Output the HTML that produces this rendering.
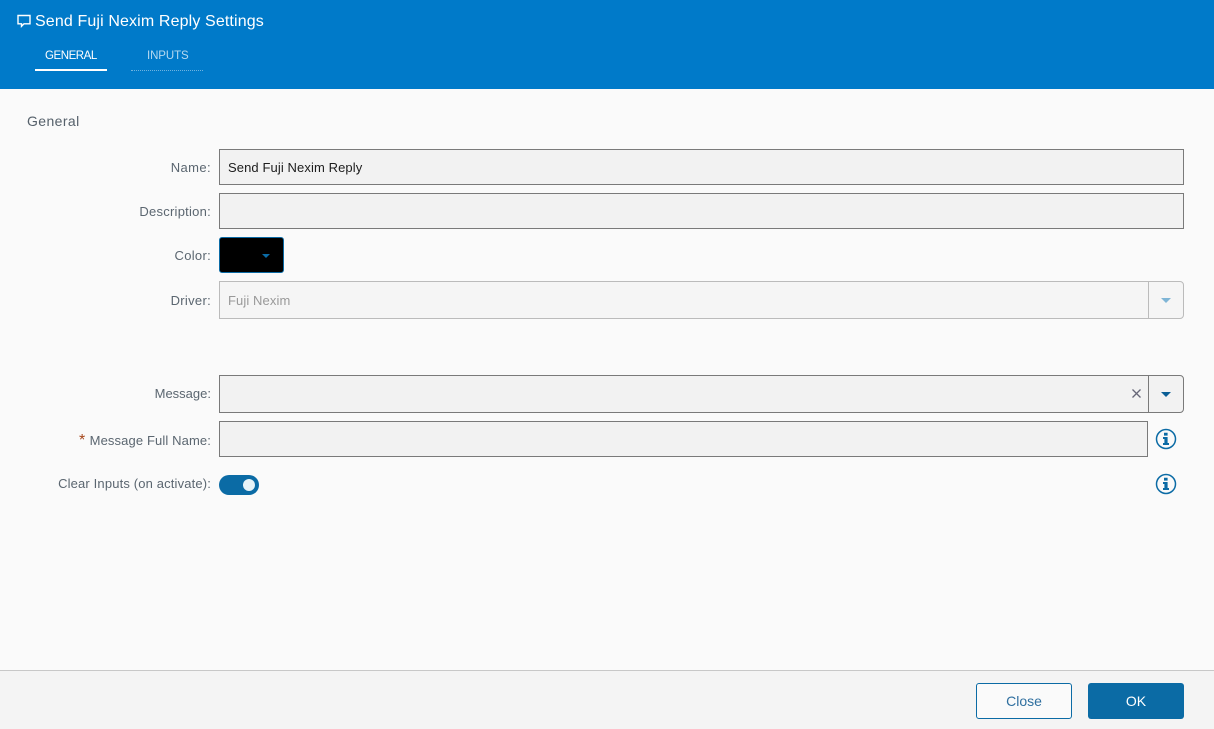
<!DOCTYPE html>
<html><head><meta charset="utf-8"><style>
*{box-sizing:border-box}
html,body{margin:0;padding:0}
body{width:1214px;height:729px;position:relative;overflow:hidden;background:#fafafa;font-family:"Liberation Sans",sans-serif;font-size:13px;color:#5f6b75}
.a{position:absolute;white-space:nowrap}
.l{position:absolute;right:1003px;white-space:nowrap;line-height:18px;color:#5b6670;font-size:13px}
.i{position:absolute;left:219px;background:#f2f2f2;border:1px solid #7a7a7a}
</style></head><body>
<div class="a" style="left:0;top:0;width:1214px;height:89px;background:#007ac9"></div>
<svg class="a" style="left:17px;top:14px" width="14" height="14" viewBox="0 0 14 14"><path d="M1 1.500H13V9.800H7L4.500 12.300V9.800H1Z" fill="none" stroke="#fff" stroke-width="1.400"/></svg>
<div class="a" style="left:35px;top:12px;line-height:20px;font-size:16px;color:#fff;letter-spacing:.13px">Send Fuji Nexim Reply Settings</div>
<div class="a" style="left:45px;top:47px;line-height:18px;font-size:11.500px;color:#fff;letter-spacing:-.45px">GENERAL</div>
<div class="a" style="left:35px;top:69px;width:72px;height:2px;background:#fff"></div>
<div class="a" style="left:147px;top:47px;line-height:18px;font-size:11.500px;color:#b5d9f0;letter-spacing:-.1px">INPUTS</div>
<div class="a" style="left:131px;top:70px;width:72px;border-top:1px dotted #6fb3e0"></div>
<div class="a" style="left:27px;top:112px;line-height:18px;font-size:14px;color:#55606a;letter-spacing:.4px">General</div>

<div class="l" style="top:159px;letter-spacing:.4px">Name:</div>
<div class="i" style="top:149px;width:965px;height:36px"></div>
<div class="a" style="left:228px;top:159px;line-height:18px;color:#1d1d1d;letter-spacing:.1px">Send Fuji Nexim Reply</div>

<div class="l" style="top:203px;letter-spacing:.25px">Description:</div>
<div class="i" style="top:193px;width:965px;height:36px"></div>

<div class="l" style="top:247px;letter-spacing:.3px">Color:</div>
<div class="a" style="left:219px;top:237px;width:65px;height:36px;background:#000;border:1px solid #0b6ba5;border-radius:3px"></div>
<div class="a" style="left:262px;top:254px;width:0;height:0;border-left:4.500px solid transparent;border-right:4.500px solid transparent;border-top:4.500px solid #0b6ba5"></div>

<div class="l" style="top:292px;letter-spacing:.3px">Driver:</div>
<div class="i" style="top:281px;width:965px;height:38px;background:#f5f5f5;border-color:#bbb;border-radius:0 4px 4px 0"></div>
<div class="a" style="left:228px;top:292px;line-height:18px;color:#999;letter-spacing:.1px">Fuji Nexim</div>
<div class="a" style="left:1148px;top:282px;width:1px;height:36px;background:#bbb"></div>
<div class="a" style="left:1161px;top:298px;width:0;height:0;border-left:5px solid transparent;border-right:5px solid transparent;border-top:5px solid #7fb5d6"></div>

<div class="l" style="top:385px">Message:</div>
<div class="i" style="top:375px;width:965px;height:38px;border-radius:0 4px 4px 0"></div>
<svg class="a" style="left:1131px;top:388px" width="11" height="11" viewBox="0 0 11 11"><path d="M1.500 1.500L9.500 9.500M9.500 1.500L1.500 9.500" stroke="#667" stroke-width="1.300" fill="none"/></svg>
<div class="a" style="left:1148px;top:376px;width:1px;height:36px;background:#7a7a7a"></div>
<div class="a" style="left:1161px;top:392px;width:0;height:0;border-left:5px solid transparent;border-right:5px solid transparent;border-top:5px solid #0b5f96"></div>

<div class="l" style="top:432px;letter-spacing:.12px">Message Full Name:</div>
<div class="a" style="left:79px;top:432px;line-height:18px;color:#a5461a;font-size:16px">*</div>
<div class="i" style="top:421px;width:929px;height:36px"></div>
<svg class="a" style="left:1155px;top:428px" width="22" height="22" viewBox="0 0 22 22"><circle cx="11" cy="11" r="9.500" fill="none" stroke="#0b6ba5" stroke-width="1.500"/><path d="M9 4.800h3.600v2.800H9zM8 9h4.600v6h1.400v2H8v-2h1.400v-4H8z" fill="#0b6ba5"/></svg>

<div class="l" style="top:475px;letter-spacing:.15px">Clear Inputs (on activate):</div>
<div class="a" style="left:219px;top:475px;width:40px;height:20px;border-radius:10px;background:#0b6ba5"></div>
<div class="a" style="left:243px;top:479px;width:12px;height:12px;border-radius:50%;background:#e6f3f8"></div>
<svg class="a" style="left:1155px;top:473px" width="22" height="22" viewBox="0 0 22 22"><circle cx="11" cy="11" r="9.500" fill="none" stroke="#0b6ba5" stroke-width="1.500"/><path d="M9 4.800h3.600v2.800H9zM8 9h4.600v6h1.400v2H8v-2h1.400v-4H8z" fill="#0b6ba5"/></svg>

<div class="a" style="left:0;top:670px;width:1214px;height:59px;background:#f4f4f4;border-top:1px solid #c8c8c8"></div>
<div class="a" style="left:976px;top:683px;width:96px;height:36px;border:1px solid #0b6ba5;border-radius:3px;background:#fafafa;color:#2f6f9f;font-size:14px;line-height:34px;text-align:center">Close</div>
<div class="a" style="left:1088px;top:683px;width:96px;height:36px;border-radius:3px;background:#0b6ba5;color:#fff;font-size:14px;line-height:36px;text-align:center">OK</div>
</body></html>
